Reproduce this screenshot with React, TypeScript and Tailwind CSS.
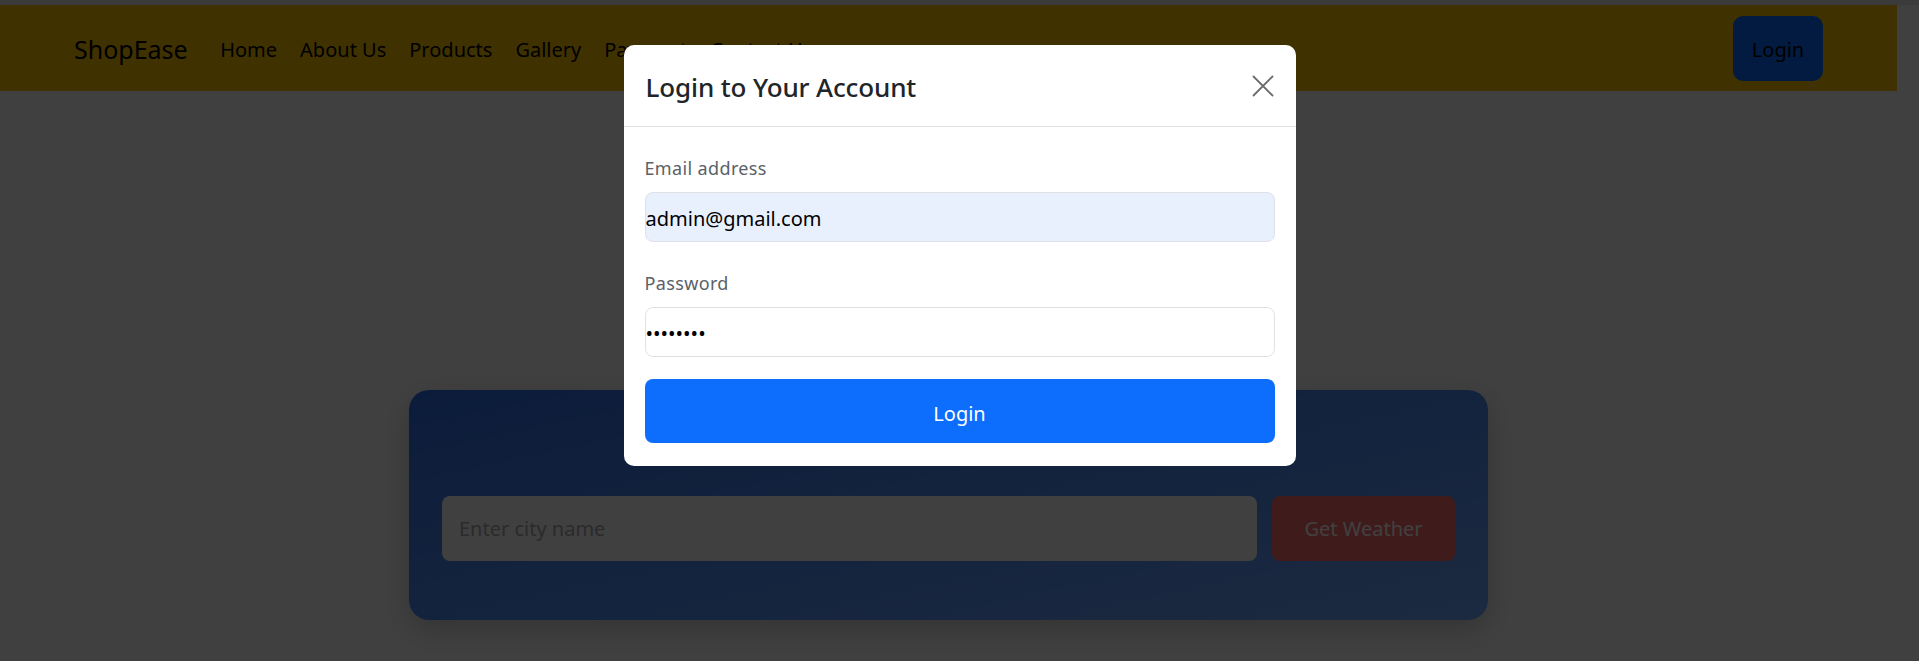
import React from 'react';

const links = ['Home', 'About Us', 'Products', 'Gallery', 'Payment', 'Contact Us'];

const Navbar = () => (
  <nav className="h-[86px] bg-[#ffc107] px-[74px] flex items-center justify-between text-black">
    <div className="flex items-center pt-[3px]">
      <span className="text-[25px] mr-[21px]">ShopEase</span>
      <ul className="flex items-center">
        {links.map((l) => (
          <li key={l} className="px-[11.5px] text-[20px]">
            {l}
          </li>
        ))}
      </ul>
    </div>
    <button className="w-[90px] h-[65px] pt-[3px] rounded-[10px] bg-[#0d6efd] text-[20px] text-black">Login</button>
  </nav>
);

const WeatherCard = () => (
  <div className="w-[1079px] mx-auto mt-[299px] rounded-[20px] bg-gradient-to-br from-[#2e70e8] to-[#70a8ff] px-[33px] pt-[30px] pb-[59px] shadow-[0_10px_30px_rgba(0,0,0,0.2)]">
    <h2 className="text-center text-white text-[30px] leading-[48px] mb-[28px]">Weather App</h2>
    <div className="flex gap-[15px]">
      <input
        placeholder="Enter city name"
        className="flex-1 h-[65px] rounded-[8px] bg-white pl-[17px] text-[20px] placeholder:text-[#aaaaaa] outline-none"
      />
      <button className="w-[183px] h-[65px] rounded-[8px] bg-[#ff6b6b] text-white text-[20px]">Get Weather</button>
    </div>
  </div>
);

const LoginModal = () => (
  <div className="fixed inset-0 bg-black/75 flex justify-center items-start pt-[45px]">
    <div className="w-[672px] rounded-[10px] bg-white text-[#212529]">
      <div className="h-[82px] px-[22px] flex items-center justify-between border-b border-[#dee2e6]">
        <h5 className="text-[26px] font-medium pt-[3px] tracking-[-0.005em]">Login to Your Account</h5>
        <button className="w-[22px] h-[22px] flex items-center justify-center">
          <svg width="22" height="22" viewBox="0 0 22 22" stroke="#6c6c6c" strokeWidth="1.8" strokeLinecap="round">
            <path d="M1.5 1.5L20.5 20.5M20.5 1.5L1.5 20.5" />
          </svg>
        </button>
      </div>
      <form className="px-[21px] pt-[28px] pb-[23px] flex flex-col">
        <label className="text-[18px] leading-[27px] tracking-[0.02em] text-[#5a6168] mb-[10px]">Email address</label>
        <input
          readOnly
          value="admin@gmail.com"
          className="h-[50px] pt-[3px] rounded-[8px] border border-[#dee2e6] bg-[#e8f0fe] text-[20px] text-black outline-none"
        />
        <label className="text-[18px] leading-[27px] tracking-[0.02em] text-[#5a6168] mt-[28px] mb-[10px]">Password</label>
        <input
          readOnly
          type="password"
          value="admin123"
          className="h-[50px] pt-[2px] rounded-[8px] border border-[#dee2e6] bg-white text-[20px] text-black outline-none"
        />
        <button type="button" className="mt-[22px] h-[64px] pt-[5px] rounded-[8px] bg-[#0d6efd] text-white text-[20px]">
          Login
        </button>
      </form>
    </div>
  </div>
);

export default function App() {
  return (
    <div className="min-h-screen bg-white" style={{ fontFamily: '"Noto Sans", sans-serif' }}>
      <div className="h-[5px] bg-[#ececec]" />
      <div className="pr-[22px]">
        <Navbar />
        <WeatherCard />
      </div>
      <LoginModal />
    </div>
  );
}
